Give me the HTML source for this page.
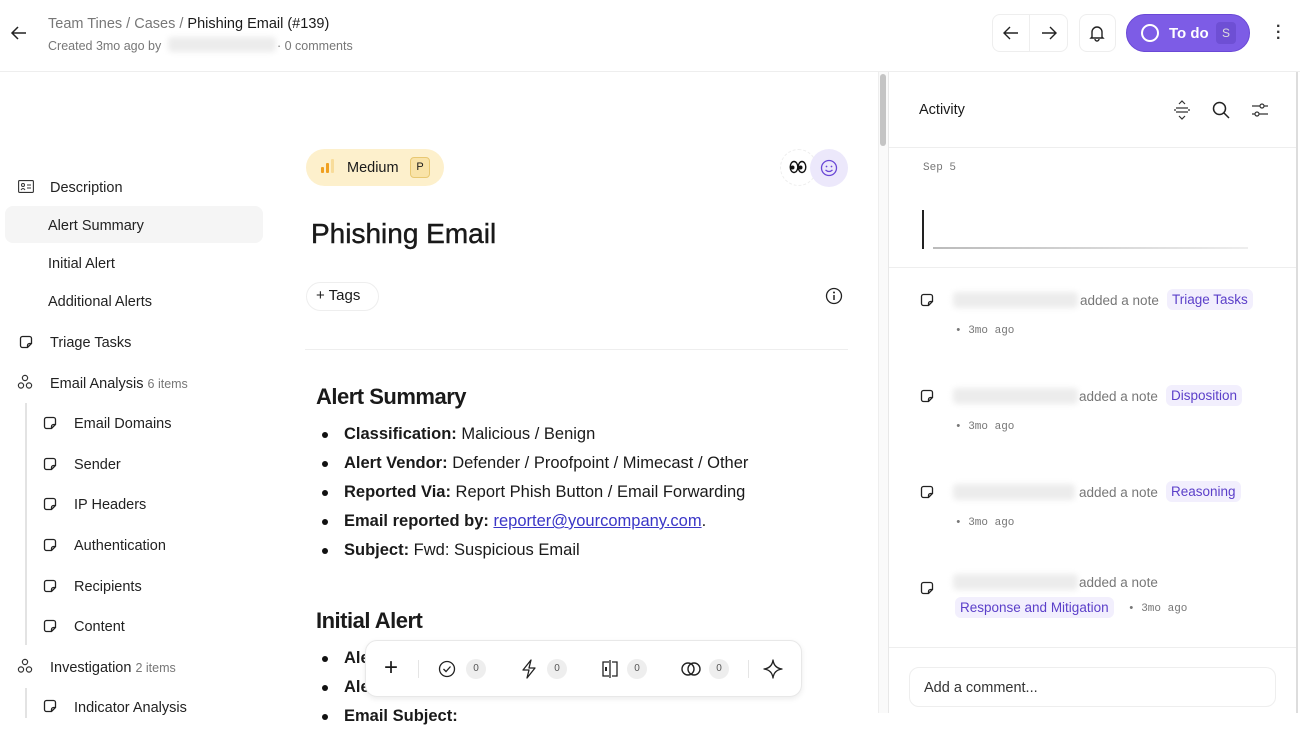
<!DOCTYPE html>
<html><head><meta charset="utf-8"><style>
*{box-sizing:border-box;margin:0;padding:0}
body{width:1300px;height:713px;overflow:hidden;background:#fff;font-family:"Liberation Sans",sans-serif;color:#1a1a1a;position:relative}
.a{position:absolute;white-space:nowrap}
.g{color:#777}
.nav{font-size:14.5px;color:#222;margin-top:2px}
.blur{background:#ececec;filter:blur(3px);border-radius:4px}
.mono{font-family:"Liberation Mono",monospace;font-size:11px;color:#777}
.tag{background:#f2effd;color:#5b3fc9;border-radius:6px;padding:3px 5px;font-size:13.5px;margin-top:1px}
.cnt{display:inline-block;width:20px;height:20px;border-radius:10px;background:#eee;font-size:10px;color:#555;text-align:center;line-height:20px}
ul{position:absolute;left:322px;list-style:none;font-size:16.5px}
li{height:29px;position:relative;padding-left:22px}
li:before{content:"";position:absolute;left:0;top:7px;width:6px;height:6px;border-radius:3px;background:#111}
</style></head><body>
<svg class="a" style="left:10px;top:24px" width="18" height="18" viewBox="0 0 18 18"><path d="M16 9H2M8 3L2 9l6 6" fill="none" stroke="#222" stroke-width="1.5"/></svg>
<div class="a" style="left:48px;top:16px;font-size:14.5px"><span class="g">Team Tines / Cases / </span>Phishing Email (#139)</div>
<div class="a g" style="left:48px;top:39px;font-size:12.5px">Created 3mo ago by</div>
<div class="a blur" style="left:168px;top:37px;width:108px;height:15px"></div>
<div class="a g" style="left:277px;top:39px;font-size:12.5px">· 0 comments</div>
<div class="a" style="left:992px;top:14px;width:76px;height:38px;border:1px solid #eee;border-radius:8px"></div>
<div class="a" style="left:1029px;top:15px;width:1px;height:36px;background:#eee"></div>
<svg class="a" style="left:1002px;top:24px" width="18" height="18" viewBox="0 0 18 18"><path d="M16 9H2M8 3L2 9l6 6" fill="none" stroke="#222" stroke-width="1.4"/></svg>
<svg class="a" style="left:1040px;top:24px" width="18" height="18" viewBox="0 0 18 18"><path d="M2 9h14M10 3l6 6-6 6" fill="none" stroke="#222" stroke-width="1.4"/></svg>
<div class="a" style="left:1079px;top:14px;width:37px;height:38px;border:1px solid #eee;border-radius:8px"></div>
<svg class="a" style="left:1088px;top:24px" width="18" height="18" viewBox="0 0 18 18"><path d="M4 13V8a5 5 0 0 1 10 0v5l1 1H3zM7 15a2 2 0 0 0 4 0" fill="none" stroke="#222" stroke-width="1.4"/></svg>
<div class="a" style="left:1126px;top:14px;width:124px;height:38px;border-radius:19px;background:#7d5ce6;border:1px solid #6a48d6"></div>
<div class="a" style="left:1141px;top:24px;width:18px;height:18px;border:2px solid #fff;border-radius:50%"></div>
<div class="a" style="left:1169px;top:25px;color:#fff;font-size:15px;font-weight:bold">To do</div>
<div class="a" style="left:1216px;top:22px;width:20px;height:22px;border-radius:4px;background:#6e4fd4;color:#ddd;font-size:12px;text-align:center;line-height:22px">S</div>
<div class="a" style="left:1276px;top:24px;font-size:16px;font-weight:bold;line-height:6px;color:#333">·<br>·<br>·</div>
<div class="a" style="left:0;top:71px;width:1300px;height:1px;background:#eee"></div>

<!-- sidebar -->
<svg class="a" style="left:18px;top:180px" width="16" height="13" viewBox="0 0 16 13"><rect x=".6" y=".6" width="14.8" height="11.8" rx="1" fill="none" stroke="#333" stroke-width="1.1"/><circle cx="5" cy="5" r="1.5" fill="none" stroke="#333"/><path d="M3 10q2-3 4 0M9 5h4M9 8h4" stroke="#333" fill="none"/></svg>
<div class="a nav" style="left:50px;top:178px">Description</div>
<div class="a" style="left:5px;top:206px;width:258px;height:37px;background:#f5f5f5;border-radius:8px"></div>
<div class="a nav" style="left:48px;top:216px">Alert Summary</div>
<div class="a nav" style="left:48px;top:254px">Initial Alert</div>
<div class="a nav" style="left:48px;top:292px">Additional Alerts</div>
<div class="a nav" style="left:50px;top:333px">Triage Tasks</div>
<div class="a nav" style="left:50px;top:374px">Email Analysis <span class="g" style="font-size:12.5px">6 items</span></div>
<div class="a" style="left:25px;top:403px;width:2px;height:242px;background:#e3e3e3"></div>
<div class="a nav" style="left:74px;top:414px">Email Domains</div>
<div class="a nav" style="left:74px;top:455px">Sender</div>
<div class="a nav" style="left:74px;top:495px">IP Headers</div>
<div class="a nav" style="left:74px;top:536px">Authentication</div>
<div class="a nav" style="left:74px;top:577px">Recipients</div>
<div class="a nav" style="left:74px;top:617px">Content</div>
<div class="a nav" style="left:50px;top:658px">Investigation <span class="g" style="font-size:12.5px">2 items</span></div>
<div class="a" style="left:25px;top:688px;width:2px;height:30px;background:#e3e3e3"></div>
<div class="a nav" style="left:74px;top:698px">Indicator Analysis</div>
<svg width="0" height="0" style="position:absolute"><defs><symbol id="n" viewBox="0 0 14 14"><path d="M8.5 12.5H3.5a2 2 0 0 1-2-2v-7a2 2 0 0 1 2-2h7a2 2 0 0 1 2 2v5zM12.5 8.5h-2a2 2 0 0 0-2 2v2" fill="none" stroke="#222" stroke-width="1.3"/></symbol><symbol id="o" viewBox="0 0 16 16"><circle cx="8" cy="4" r="2.6" fill="none" stroke="#333" stroke-width="1.2"/><circle cx="4" cy="11.5" r="2.6" fill="none" stroke="#333" stroke-width="1.2"/><circle cx="12" cy="11.5" r="2.6" fill="none" stroke="#333" stroke-width="1.2"/></symbol></defs></svg>
<svg class="a" style="left:19px;top:335px" width="14" height="14"><use href="#n"/></svg>
<svg class="a" style="left:17px;top:374px" width="16" height="16"><use href="#o"/></svg>
<svg class="a" style="left:43px;top:416px" width="14" height="14"><use href="#n"/></svg>
<svg class="a" style="left:43px;top:457px" width="14" height="14"><use href="#n"/></svg>
<svg class="a" style="left:43px;top:497px" width="14" height="14"><use href="#n"/></svg>
<svg class="a" style="left:43px;top:538px" width="14" height="14"><use href="#n"/></svg>
<svg class="a" style="left:43px;top:579px" width="14" height="14"><use href="#n"/></svg>
<svg class="a" style="left:43px;top:619px" width="14" height="14"><use href="#n"/></svg>
<svg class="a" style="left:17px;top:658px" width="16" height="16"><use href="#o"/></svg>
<svg class="a" style="left:43px;top:699px" width="14" height="14"><use href="#n"/></svg>

<!-- main -->
<div class="a" style="left:306px;top:149px;width:138px;height:37px;border-radius:19px;background:#fdf0cc"></div>
<div class="a" style="left:321px;top:167px;width:3px;height:6px;background:#f0a020;border-radius:1px"></div>
<div class="a" style="left:326px;top:163px;width:3px;height:10px;background:#f0a020;border-radius:1px"></div>
<div class="a" style="left:331px;top:159px;width:3px;height:14px;background:#f8dc9a;border-radius:1px"></div>
<div class="a" style="left:347px;top:160px;font-size:14.5px">Medium</div>
<div class="a" style="left:410px;top:157px;width:20px;height:21px;border:1px solid #e8c872;background:#f9e3a8;border-radius:4px;font-size:11px;text-align:center;line-height:19px">P</div>
<div class="a" style="left:780px;top:149px;width:37px;height:37px;border:1px dashed #eee;border-radius:50%"></div>
<svg class="a" style="left:789px;top:159px" width="18" height="16" viewBox="0 0 18 16"><ellipse cx="5" cy="8" rx="3.8" ry="5.5" fill="#fff" stroke="#111" stroke-width="1.4"/><ellipse cx="13" cy="8" rx="3.8" ry="5.5" fill="#fff" stroke="#111" stroke-width="1.4"/><circle cx="3.5" cy="8.5" r="2" fill="#111"/><circle cx="11.5" cy="8.5" r="2" fill="#111"/></svg>
<div class="a" style="left:810px;top:149px;width:38px;height:38px;background:#ece8fb;border-radius:50%"></div>
<svg class="a" style="left:820px;top:159px" width="18" height="18" viewBox="0 0 18 18"><circle cx="9" cy="9" r="7.5" fill="none" stroke="#6a48d6" stroke-width="1.3"/><circle cx="6.5" cy="7.5" r=".9" fill="#6a48d6"/><circle cx="11.5" cy="7.5" r=".9" fill="#6a48d6"/><path d="M5.5 11q3.5 3 7 0" fill="none" stroke="#6a48d6" stroke-width="1.3"/></svg>
<div class="a" style="left:311px;top:218px;font-size:28px;font-weight:500;-webkit-text-stroke:.4px #111">Phishing Email</div>
<div class="a" style="left:306px;top:282px;width:73px;height:29px;border:1px solid #eee;border-radius:15px"></div>
<div class="a" style="left:316px;top:287px;font-size:15px">+ Tags</div>
<svg class="a" style="left:825px;top:287px" width="18" height="18" viewBox="0 0 18 18"><circle cx="9" cy="9" r="7.5" fill="none" stroke="#222" stroke-width="1.3"/><path d="M9 8v5" stroke="#222" stroke-width="1.5"/><circle cx="9" cy="5.5" r="1" fill="#222"/></svg>
<div class="a" style="left:305px;top:349px;width:543px;height:1px;background:#eee"></div>
<div class="a" style="left:316px;top:384px;font-size:22px;font-weight:bold;letter-spacing:-.5px">Alert Summary</div>
<ul style="top:425px">
<li><b>Classification:</b> Malicious / Benign</li>
<li><b>Alert Vendor:</b> Defender / Proofpoint / Mimecast / Other</li>
<li><b>Reported Via:</b> Report Phish Button / Email Forwarding</li>
<li><b>Email reported by:</b> <span style="color:#3b36c7;text-decoration:underline">reporter@yourcompany.com</span>.</li>
<li><b>Subject:</b> Fwd: Suspicious Email</li>
</ul>
<div class="a" style="left:316px;top:608px;font-size:22px;font-weight:bold;letter-spacing:-.5px">Initial Alert</div>
<ul style="top:649px"><li><b>Ale</b></li><li><b>Ale</b></li><li><b>Email Subject:</b></li></ul>
<div class="a" style="left:365px;top:640px;width:437px;height:57px;background:#fff;border:1px solid #e8e8e8;border-radius:12px;box-shadow:0 2px 6px rgba(0,0,0,.08)"></div>
<div class="a" style="left:384px;top:654px;font-size:24px;font-weight:300">+</div>
<div class="a" style="left:418px;top:660px;width:1px;height:18px;background:#e5e5e5"></div>
<div class="a" style="left:748px;top:660px;width:1px;height:18px;background:#e5e5e5"></div>
<svg class="a" style="left:438px;top:660px" width="18" height="18" viewBox="0 0 18 18"><circle cx="9" cy="9" r="7.5" fill="none" stroke="#222" stroke-width="1.3"/><path d="M5.5 9l2.5 2.5 4.5-5" fill="none" stroke="#222" stroke-width="1.3"/></svg>
<span class="a cnt" style="left:466px;top:659px">0</span>
<svg class="a" style="left:520px;top:659px" width="18" height="20" viewBox="0 0 18 20"><path d="M11 1L3 11h6l-2 8 8-10H9z" fill="none" stroke="#222" stroke-width="1.3" stroke-linejoin="round"/></svg>
<span class="a cnt" style="left:547px;top:659px">0</span>
<svg class="a" style="left:600px;top:660px" width="20" height="18" viewBox="0 0 20 18"><path d="M9 2H3v14h6M12 2h5v14h-5M10 0v18" fill="none" stroke="#222" stroke-width="1.3"/><rect x="5" y="7" width="2" height="4" fill="#222"/></svg>
<span class="a cnt" style="left:627px;top:659px">0</span>
<svg class="a" style="left:680px;top:660px" width="22" height="18" viewBox="0 0 22 18"><circle cx="8" cy="9" r="6" fill="none" stroke="#222" stroke-width="1.4"/><circle cx="14" cy="9" r="6" fill="none" stroke="#222" stroke-width="1.4"/></svg>
<span class="a cnt" style="left:709px;top:659px">0</span>
<svg class="a" style="left:763px;top:659px" width="20" height="20" viewBox="0 0 20 20"><path d="M10 1q1 8 9 9q-8 1-9 9q-1-8-9-9q8-1 9-9z" fill="none" stroke="#222" stroke-width="1.3" stroke-linejoin="round"/></svg>
<div class="a" style="left:878px;top:72px;width:10px;height:641px;background:#fafafa;border-left:1px solid #eee"></div>
<div class="a" style="left:880px;top:74px;width:6px;height:72px;background:#c4c4c4;border-radius:3px"></div>
<div class="a" style="left:888px;top:72px;width:1px;height:641px;background:#e8e8e8"></div>

<!-- right -->
<div class="a" style="left:919px;top:102px;font-size:14.5px">Activity</div>
<svg class="a" style="left:1173px;top:100px" width="18" height="20" viewBox="0 0 18 20"><path d="M6 4l3-3 3 3M6 16l3 3 3-3M3 8h12M3 12h12M1 10h2M15 10h2" fill="none" stroke="#333" stroke-width="1.2"/></svg>
<svg class="a" style="left:1212px;top:101px" width="18" height="18" viewBox="0 0 18 18"><circle cx="7.5" cy="7.5" r="6" fill="none" stroke="#222" stroke-width="1.5"/><path d="M12 12l5 5" stroke="#222" stroke-width="1.5"/></svg>
<svg class="a" style="left:1251px;top:101px" width="18" height="18" viewBox="0 0 18 18"><path d="M1 5h16M1 13h16" stroke="#333" stroke-width="1.2"/><circle cx="11" cy="5" r="2" fill="#fff" stroke="#333" stroke-width="1.2"/><circle cx="6" cy="13" r="2" fill="#fff" stroke="#333" stroke-width="1.2"/></svg>
<div class="a" style="left:889px;top:147px;width:407px;height:1px;background:#eee"></div>
<div class="a mono" style="left:923px;top:162px">Sep 5</div>
<div class="a" style="left:922px;top:210px;width:2px;height:39px;background:#222"></div>
<div class="a" style="left:933px;top:247px;width:315px;height:2px;background:linear-gradient(90deg,#bbb,#eee)"></div>
<div class="a" style="left:889px;top:267px;width:407px;height:1px;background:#eee"></div>

<svg class="a" style="left:920px;top:293px" width="14" height="14"><use href="#n"/></svg>
<div class="a blur" style="left:953px;top:292px;width:125px;height:16px"></div>
<div class="a g" style="left:1080px;top:293px;font-size:13.5px">added a note</div>
<div class="a tag" style="left:1167px;top:288px">Triage Tasks</div>
<div class="a mono" style="left:955px;top:325px">• 3mo ago</div>

<svg class="a" style="left:920px;top:389px" width="14" height="14"><use href="#n"/></svg>
<div class="a blur" style="left:953px;top:388px;width:125px;height:16px"></div>
<div class="a g" style="left:1079px;top:389px;font-size:13.5px">added a note</div>
<div class="a tag" style="left:1166px;top:384px">Disposition</div>
<div class="a mono" style="left:955px;top:421px">• 3mo ago</div>

<svg class="a" style="left:920px;top:485px" width="14" height="14"><use href="#n"/></svg>
<div class="a blur" style="left:953px;top:484px;width:122px;height:16px"></div>
<div class="a g" style="left:1079px;top:485px;font-size:13.5px">added a note</div>
<div class="a tag" style="left:1166px;top:480px">Reasoning</div>
<div class="a mono" style="left:955px;top:517px">• 3mo ago</div>

<svg class="a" style="left:920px;top:581px" width="14" height="14"><use href="#n"/></svg>
<div class="a blur" style="left:953px;top:574px;width:125px;height:16px"></div>
<div class="a g" style="left:1079px;top:575px;font-size:13.5px">added a note</div>
<div class="a tag" style="left:955px;top:596px">Response and Mitigation</div>
<div class="a mono" style="left:1128px;top:603px">• 3mo ago</div>
<div class="a" style="left:889px;top:647px;width:407px;height:1px;background:#eee"></div>
<div class="a" style="left:909px;top:667px;width:367px;height:40px;border:1px solid #eee;border-radius:10px"></div>
<div class="a" style="left:924px;top:680px;font-size:14.5px;color:#333">Add a comment...</div>
<div class="a" style="left:1296px;top:72px;width:2px;height:641px;background:#ddd"></div>
</body></html>
